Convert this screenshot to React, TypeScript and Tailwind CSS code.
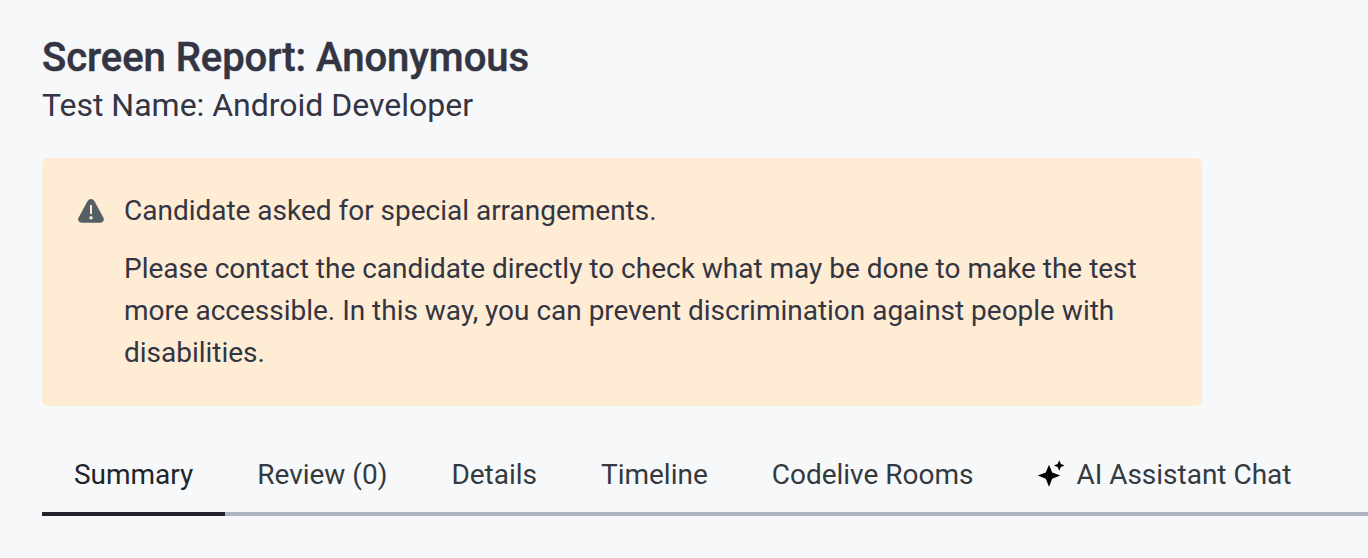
const tabs = ["Summary", "Review (0)", "Details", "Timeline", "Codelive Rooms", "AI Assistant Chat"];

function WarningIcon() {
  return (
    <svg width="26" height="24" viewBox="0 0 26 24" className="mt-[9px] shrink-0" aria-hidden="true">
      <path
        fill="#535e65"
        d="M9.6 2a4 4 0 0 1 6.8 0l8.900 16.500a3.400 3.400 0 0 1-2.900 5.200H3.600a3.400 3.400 0 0 1-2.900-5.200z"
      />
      <path stroke="#ffecd4" strokeWidth="2" strokeLinecap="round" d="M13 6.800v7.500" />
      <circle cx="13" cy="18.700" r="1.700" fill="#ffecd4" />
    </svg>
  );
}

function SparkleIcon() {
  return (
    <svg width="28" height="28" viewBox="0 0 28 28" className="mt-1.5 shrink-0" aria-hidden="true">
      <path d="M12 4.700L15.200 12.500L23.200 15.600L15.200 18.700L12 26.700L8.800 18.700L.8 15.600L8.800 12.500z" />
      <path d="M22.200.2L23.900 3.900L27.600 5.500L23.900 7.100L22.200 10.800L20.600 7.100L16.900 5.500L20.600 3.900z" />
    </svg>
  );
}

export default function App() {
  return (
    <main className="h-[558px] overflow-hidden bg-[#f7f8fa] pl-[42px] pt-[37px] font-['Roboto',sans-serif] tracking-[-0.013px] text-[#333542]">
      <h1 className="text-[40px] font-medium leading-[42px] tracking-[-0.04px] [-webkit-text-stroke:0.5px]">
        Screen Report: Anonymous
      </h1>
      <p className="mt-[5px] text-[32px] leading-[42px]">Test Name: Android Developer</p>

      <section className="mt-8 flex h-[248px] w-[1160px] gap-5 rounded-[5px] bg-[#ffecd4] px-9 pt-8">
        <WarningIcon />
        <div className="text-[28px] leading-[42px]">
          <p>Candidate asked for special arrangements.</p>
          <p className="mt-4">
            Please contact the candidate directly to check what may be done to make the test
            <br />
            more accessible. In this way, you can prevent discrimination against people with
            <br />
            disabilities.
          </p>
        </div>
      </section>

      <nav className="mt-7 flex h-[82px] w-[1326px] border-b-4 border-[#adb5c0] text-[28px] leading-[42px] text-[#343a40]">
        {tabs.map((tab, i) => (
          <a
            key={tab}
            className={`-mb-1 flex h-[82px] items-start gap-[11px] whitespace-nowrap px-8 pt-5 ${
              i === 0 ? "border-b-4 border-[#24232e] text-[#212529]" : ""
            }`}
          >
            {tab === "AI Assistant Chat" && <SparkleIcon />}
            {tab}
          </a>
        ))}
      </nav>
    </main>
  );
}
